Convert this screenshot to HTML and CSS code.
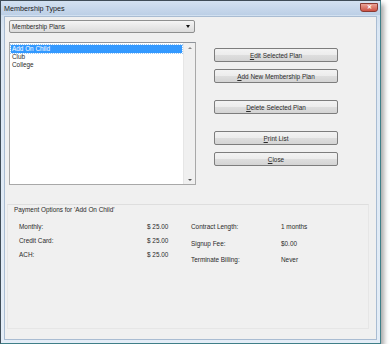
FILE: index.html
```html
<!DOCTYPE html>
<html lang="en">
<head>
    <meta charset="UTF-8">
    <title>Membership Types</title>
    <link rel="stylesheet" href="styles.css">
</head>
<body>
    <div class="window">
        <div class="titlebar">
            <span class="title">Membership Types</span>
            <button class="close-x">&#x2715;</button>
        </div>
        <div class="client">
            <div class="dropdown">
                <span>Membership Plans</span>
                <span class="arrow"></span>
            </div>
            <div class="main-row">
                <div class="listbox">
                    <div class="items">
                        <div class="item selected">Add On Child</div>
                        <div class="item">Club</div>
                        <div class="item">College</div>
                    </div>
                    <div class="scrollbar">
                        <span class="up"></span>
                        <span class="down"></span>
                    </div>
                </div>
                <div class="buttons">
                    <button class="btn"><u>E</u>dit Selected Plan</button>
                    <button class="btn gap-small"><u>A</u>dd New Membership Plan</button>
                    <button class="btn gap-big"><u>D</u>elete Selected Plan</button>
                    <button class="btn gap-big"><u>P</u>rint List</button>
                    <button class="btn gap-small"><u>C</u>lose</button>
                </div>
            </div>
            <div class="payment">
                <div class="payment-title">Payment Options for 'Add On Child'</div>
                <div class="payment-body">
                    <div class="col-left">
                        <div class="row"><span class="label">Monthly:</span><span class="value">$ 25.00</span></div>
                        <div class="row"><span class="label">Credit Card:</span><span class="value">$ 25.00</span></div>
                        <div class="row"><span class="label">ACH:</span><span class="value">$ 25.00</span></div>
                    </div>
                    <div class="col-right">
                        <div class="row"><span class="label">Contract Length:</span><span class="value">1 months</span></div>
                        <div class="row"><span class="label">Signup Fee:</span><span class="value">$0.00</span></div>
                        <div class="row"><span class="label">Terminate Billing:</span><span class="value">Never</span></div>
                    </div>
                </div>
            </div>
        </div>
    </div>
</body>
</html>
```

FILE: styles.css
```css
body {
    margin: 0;
    padding: 0;
    background: #fff;
    font-family: 'Liberation Sans', Arial, sans-serif;
    font-size: 6.4px;
    color: #2a2a2a;
}

.window {
    width: 381px;
    height: 344px;
    box-sizing: border-box;
    border: 1px solid #3f4c57;
    border-right-color: #3f7f88;
    border-bottom-color: #3f7f88;
    background: linear-gradient(to bottom, #c8d9ec, #dbe7f4 30px, #e4edf7);
    box-shadow: 3px 4px 5px rgba(0, 0, 0, 0.35);
    display: flex;
    flex-direction: column;
}

.titlebar {
    height: 14px;
    display: flex;
    align-items: center;
    padding-left: 3px;
    background: linear-gradient(to bottom, #d3e1f1, #bccfe6);
}

.title {
    font-size: 7.2px;
    color: #1b1b1b;
}

.close-x {
    margin-left: auto;
    margin-right: 2px;
    margin-top: -2px;
    width: 18px;
    height: 9px;
    padding: 0;
    border: 1px solid #8a3a33;
    border-radius: 0 0 3px 3px;
    background: linear-gradient(to bottom, #eaa397, #cd5244);
    color: #fff;
    font-size: 6px;
    line-height: 7px;
    font-weight: bold;
}

.client {
    flex: 1;
    margin: 1px 3px 3px 3px;
    background: #f0f0f0;
    border: 1px solid #a9bcd2;
}

.dropdown {
    margin: 3px 0 0 4px;
    width: 186px;
    height: 13px;
    box-sizing: border-box;
    border: 1px solid #8e8f8f;
    border-radius: 2px;
    background: linear-gradient(to bottom, #f5f5f5, #e8e8e8 50%, #dcdcdc);
    display: flex;
    align-items: center;
    padding-left: 2px;
    padding-right: 4px;
}

.dropdown .arrow {
    margin-left: auto;
    width: 0;
    height: 0;
    border-left: 2.5px solid transparent;
    border-right: 2.5px solid transparent;
    border-top: 3px solid #111;
}

.main-row {
    display: flex;
    margin-top: 9px;
    margin-left: 4px;
}

.listbox {
    width: 187px;
    height: 143px;
    box-sizing: border-box;
    border: 1px solid #a8a8a8;
    border-top-color: #8f949b;
    background: #fff;
    display: flex;
}

.items {
    flex: 1;
    padding: 2px 1px 0 1px;
}

.item {
    height: 8px;
    line-height: 8px;
    padding-left: 1px;
}

.item.selected {
    background: #3399ff;
    color: #fff;
    outline: 1px dotted #9cc9f5;
}

.scrollbar {
    width: 11px;
    background: #f0f0f0;
    border-left: 1px solid #e6e6e6;
    display: flex;
    flex-direction: column;
    justify-content: space-between;
    align-items: center;
    padding: 4px 0 3px;
}

.scrollbar .up {
    width: 0;
    height: 0;
    border-left: 2px solid transparent;
    border-right: 2px solid transparent;
    border-bottom: 2px solid #888;
}

.scrollbar .down {
    width: 0;
    height: 0;
    border-left: 2px solid transparent;
    border-right: 2px solid transparent;
    border-top: 2px solid #555;
}

.buttons {
    display: flex;
    flex-direction: column;
    margin-left: 18px;
    margin-top: 6px;
}

.btn {
    width: 124px;
    height: 14px;
    padding: 0;
    font-family: 'Liberation Sans', Arial, sans-serif;
    font-size: 6.4px;
    color: #2a2a2a;
    border: 1px solid #7d7d7d;
    border-radius: 2px;
    background: linear-gradient(to bottom, #f3f3f3, #ececec 50%, #dedede 51%, #d4d4d4);
}

.gap-small {
    margin-top: 7px;
}

.gap-big {
    margin-top: 17px;
}

.payment {
    margin: 19px 0 0 2px;
    width: 362px;
    height: 125px;
    box-sizing: border-box;
    border: 1px solid #e6e6e6;
    border-top-color: #dedede;
    background: #f0f0f0;
}

.payment-title {
    padding: 1px 0 0 6px;
    line-height: 8px;
}

.payment-body {
    display: flex;
    padding: 9px 0 0 11px;
}

.col-left {
    display: flex;
    flex-direction: column;
    gap: 6px;
}

.col-left .label {
    width: 128px;
}

.col-left .value {
    width: 44px;
}

.col-right {
    display: flex;
    flex-direction: column;
    gap: 8.5px;
}

.col-right .label {
    width: 90px;
}

.row {
    display: flex;
    height: 8px;
    line-height: 8px;
}
```
